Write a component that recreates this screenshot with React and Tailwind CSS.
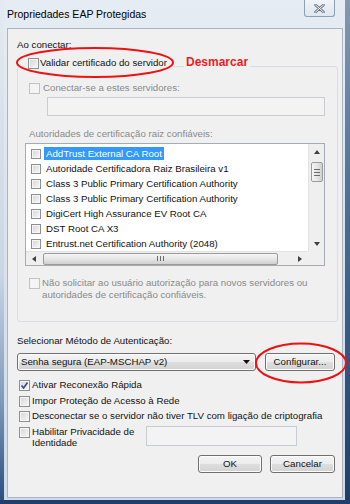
import React from 'react';

const certs = [
    'AddTrust External CA Root',
    'Autoridade Certificadora Raiz Brasileira v1',
    'Class 3 Public Primary Certification Authority',
    'Class 3 Public Primary Certification Authority',
    'DigiCert High Assurance EV Root CA',
    'DST Root CA X3',
    'Entrust.net Certification Authority (2048)',
];

const Check = ({ checked, disabled, small }) => {
    const size = small ? 'w-[10px] h-[10px]' : 'w-[11px] h-[11px]';
    const look = disabled
        ? 'border-[#c2c2c2] bg-[#f4f4f4]'
        : 'border-[#8e8f8f] bg-[linear-gradient(135deg,#d3d5d8_0%,#f8f8f8_100%)] shadow-[inset_0_0_0_1px_#f6f6f6]';
    return (
        <span className={`${size} ${look} shrink-0 border flex items-center justify-center`}>
            {checked && (
                <svg width="9" height="9" viewBox="0 0 9 9">
                    <path d="M1.5 4.5 L3.6 7 L7.5 1.5" fill="none" stroke="#34488a" strokeWidth="1.6" />
                </svg>
            )}
        </span>
    );
};

const Tri = ({ dir }) => {
    const pts = {
        up: '0,4 3,0 6,4',
        down: '0,0 6,0 3,4',
        left: '4,0 4,6 0,3',
        right: '0,0 0,6 4,3',
    }[dir];
    const w = dir === 'up' || dir === 'down' ? 6 : 4;
    const h = dir === 'up' || dir === 'down' ? 4 : 6;
    return (
        <svg width={w} height={h} viewBox={`0 0 ${w} ${h}`}>
            <polygon points={pts} fill="#404040" />
        </svg>
    );
};

const WinButton = ({ children, className }) => (
    <div className={`h-[18px] border border-[#707070] rounded-[3px] bg-[linear-gradient(#f4f4f4_0%,#ececec_50%,#dedede_50%,#d2d2d2_100%)] shadow-[inset_0_0_0_1px_#fcfcfc] flex items-center justify-center ${className}`}>
        {children}
    </div>
);

export default function App() {
    return (
        <div className="relative w-[350px] h-[504px] overflow-hidden flex flex-col bg-[#1f3e6b] font-['Liberation_Sans',Arial,sans-serif] text-[9.7px] text-[#111]">
            <div className="flex h-[500px]">
                {/* left edge */}
                <div className="w-[4px] bg-[linear-gradient(#e4eaf1_0%,#c9d6e4_55%,#7f9aba_80%,#2c4f80_100%)]" />

                {/* frame body */}
                <div className="w-[341px] bg-[linear-gradient(#e6ecf3_0%,#dbe4ee_40%,#cfdbe8_100%)] flex flex-col">
                    <div className="h-[28px] flex justify-between items-start">
                        <div className="pl-[3px] pt-[8px] text-[10.5px] leading-[13px] text-black">Propriedades EAP Protegidas</div>
                        <div className="mr-[10px] w-[31px] h-[17px] border border-t-0 border-[#8d9fb5] rounded-b-[3px] bg-[linear-gradient(#f1f4f8_0%,#dfe6ef_100%)] flex items-center justify-center">
                            <svg width="11" height="9" viewBox="0 0 11 9">
                                <path d="M1.5 1 L9.5 8 M9.5 1 L1.5 8" stroke="#6a7686" strokeWidth="2.6" strokeLinecap="round" />
                                <path d="M1.5 1 L9.5 8 M9.5 1 L1.5 8" stroke="#f4f6f8" strokeWidth="1" strokeLinecap="round" />
                            </svg>
                        </div>
                    </div>

                    {/* dialog panel */}
                    <div className="ml-[3px] w-[336px] h-[470px] border border-[#a9b5c3] bg-[#f0f0f0]">
                        <div className="mt-[10px] ml-[9px] h-[12px] leading-[12px]">Ao conectar:</div>

                        {/* group box */}
                        <div className="mt-[15px] ml-[9px] w-[321px] h-[256px] border border-[#d5dfe5] rounded-[3px]">
                            <div className="-mt-[10px] ml-[7px] w-fit px-[3px] bg-[#f0f0f0] h-[12px] flex items-center gap-[1px]">
                                <Check />
                                <span className="leading-[12px]">Validar certificado do servidor</span>
                            </div>

                            <div className="mt-[13px] ml-[11px] h-[12px] flex items-center gap-[3px] text-[#8a8a8a]">
                                <Check disabled />
                                <span className="leading-[12px]">Conectar-se a estes servidores:</span>
                            </div>
                            <div className="mt-[3px] ml-[29px] w-[278px] h-[19px] border border-[#c9cdd2] bg-[#f3f3f3]" />

                            <div className="mt-[12px] ml-[11px] h-[12px] leading-[12px] text-[#8a8a8a]">Autoridades de certificação raiz confiáveis:</div>

                            {/* certificate list */}
                            <div className="mt-[3px] ml-[7px] w-[300px] h-[123px] border border-[#a4abb4] bg-white flex flex-col">
                                <div className="flex h-[107px]">
                                    <div className="flex-1 pt-[2px]">
                                        {certs.map((c, i) => (
                                            <div key={i} className="h-[15px] pl-[5px] flex items-center gap-[3px]">
                                                <Check small />
                                                <span className={`px-[2px] h-[13px] leading-[13px] whitespace-nowrap ${i === 0 ? 'bg-[#3399ff] text-white' : ''}`}>{c}</span>
                                            </div>
                                        ))}
                                    </div>
                                    <div className="w-[16px] bg-[#efefef] border-l border-[#e2e2e2] flex flex-col items-center">
                                        <div className="h-[16px] flex items-center justify-center"><Tri dir="up" /></div>
                                        <div className="mt-[2px] w-[12px] h-[20px] border border-[#9b9b9b] rounded-[2px] bg-[linear-gradient(90deg,#f6f6f6_0%,#e2e2e2_60%,#d0d0d0_100%)] flex flex-col items-center justify-center gap-[2px]">
                                            <span className="w-[6px] h-[1px] bg-[#6b6b6b]" />
                                            <span className="w-[6px] h-[1px] bg-[#6b6b6b]" />
                                            <span className="w-[6px] h-[1px] bg-[#6b6b6b]" />
                                        </div>
                                        <div className="flex-1" />
                                        <div className="h-[15px] flex items-center justify-center"><Tri dir="down" /></div>
                                    </div>
                                </div>
                                <div className="flex h-[14px]">
                                    <div className="flex-1 bg-[#efefef] border-t border-[#e2e2e2] flex items-center">
                                        <div className="w-[16px] flex justify-center"><Tri dir="left" /></div>
                                        <div className="ml-[1px] w-[235px] h-[12px] border border-[#9b9b9b] rounded-[2px] bg-[linear-gradient(#f6f6f6_0%,#e2e2e2_60%,#d0d0d0_100%)] flex items-center justify-center gap-[2px]">
                                            <span className="w-[1px] h-[5px] bg-[#6b6b6b]" />
                                            <span className="w-[1px] h-[5px] bg-[#6b6b6b]" />
                                            <span className="w-[1px] h-[5px] bg-[#6b6b6b]" />
                                        </div>
                                        <div className="flex-1" />
                                        <div className="w-[16px] flex justify-center"><Tri dir="right" /></div>
                                    </div>
                                    <div className="w-[16px] bg-[#efefef]" />
                                </div>
                            </div>

                            <div className="mt-[11px] ml-[11px] flex items-start gap-[2px] text-[#8a8a8a]">
                                <span className="mt-[1px]"><Check disabled /></span>
                                <span className="leading-[12px]">
                                    Não solicitar ao usuário autorização para novos servidores ou<br />
                                    autoridades de certificação confiáveis.
                                </span>
                            </div>
                        </div>

                        <div className="mt-[13px] ml-[9px] h-[12px] leading-[12px]">Selecionar Método de Autenticação:</div>

                        <div className="mt-[6px] ml-[9px] flex gap-[9px]">
                            <WinButton className="w-[239px] !justify-between pl-[3px] pr-[5px]">
                                <span>Senha segura (EAP-MSCHAP v2)</span>
                                <svg width="7" height="4" viewBox="0 0 7 4"><polygon points="0,0 7,0 3.5,4" fill="#111" /></svg>
                            </WinButton>
                            <WinButton className="w-[70px]">Configurar...</WinButton>
                        </div>

                        <div className="mt-[8px] ml-[11px] h-[12px] flex items-center gap-[2px]">
                            <Check checked />
                            <span className="leading-[12px]">Ativar Reconexão Rápida</span>
                        </div>
                        <div className="mt-[4px] ml-[11px] h-[12px] flex items-center gap-[2px]">
                            <Check />
                            <span className="leading-[12px]">Impor Proteção de Acesso à Rede</span>
                        </div>
                        <div className="mt-[3px] ml-[11px] h-[12px] flex items-center gap-[2px]">
                            <Check />
                            <span className="leading-[12px] whitespace-nowrap">Desconectar se o servidor não tiver TLV com ligação de criptografia</span>
                        </div>
                        <div className="mt-[4px] ml-[11px] flex items-start">
                            <div className="w-[127px] flex items-start gap-[2px]">
                                <span className="mt-[0.5px]"><Check /></span>
                                <span className="leading-[11px]">Habilitar Privacidade de<br />Identidade</span>
                            </div>
                            <div className="w-[151px] h-[20px] border border-[#c9cdd2] bg-[#f3f3f3]" />
                        </div>

                        <div className="mt-[7px] pr-[7px] flex justify-end gap-[8px]">
                            <WinButton className="w-[64px]">OK</WinButton>
                            <WinButton className="w-[65px]">Cancelar</WinButton>
                        </div>
                    </div>
                </div>

                {/* right edge */}
                <div className="w-[5px] bg-[linear-gradient(#8299b3_0%,#4f6f96_40%,#1f3e6b_100%)]" />
            </div>
            <div className="h-[4px] bg-[#1f3e6b]" />

            {/* red annotations */}
            <svg className="absolute inset-0 pointer-events-none" width="350" height="504">
                <ellipse cx="95" cy="62.5" rx="78" ry="14.5" fill="none" stroke="#ee1111" strokeWidth="2" />
                <ellipse cx="301" cy="363" rx="45" ry="19.5" fill="none" stroke="#ee1111" strokeWidth="2" />
            </svg>
            <span className="absolute left-[184px] top-[55px] px-[2px] bg-[#f0f0f0] text-[12px] leading-[14px] font-bold text-[#ee1c24]">Desmarcar</span>
        </div>
    );
}
